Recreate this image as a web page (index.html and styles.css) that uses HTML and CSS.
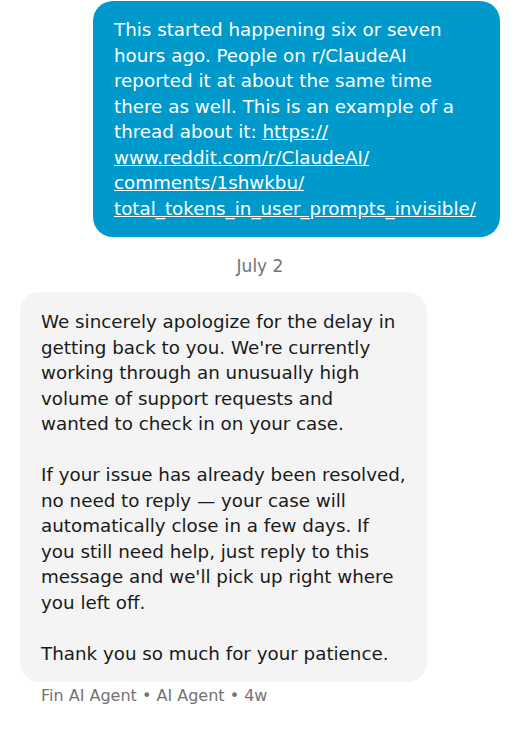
FILE: index.html
```html
<!DOCTYPE html>
<html>
<head>
<meta charset="utf-8">
<link rel="stylesheet" href="styles.css">
</head>
<body>
<div class="chat">
  <div class="row row-user">
    <div class="bubble bubble-user">This started happening six or seven hours ago. People on r/ClaudeAI reported it at about the same time there as well. This is an example of a thread about it: <a href="#">https://<wbr>www.reddit.com/r/ClaudeAI/<wbr>comments/1shwkbu/<wbr>total_tokens_in_user_prompts_invisible/</a></div>
  </div>
  <div class="date">July 2</div>
  <div class="row row-agent">
    <div class="bubble bubble-agent">
      <p>We sincerely apologize for the delay in getting back to you. We're currently working through an unusually high volume of support requests and wanted to check in on your case.</p>
      <p>If your issue has already been resolved, no need to reply — your case will automatically close in a few days. If you still need help, just reply to this message and we'll pick up right where you left off.</p>
      <p>Thank you so much for your patience.</p>
    </div>
    <div class="meta">Fin AI Agent • AI Agent • 4w</div>
  </div>
</div>
</body>
</html>
```

FILE: styles.css
```css
html, body {
  margin: 0;
  padding: 0;
  background: #ffffff;
}
body {
  font-family: "DejaVu Sans", sans-serif;
}
.chat {
  display: flex;
  flex-direction: column;
  padding: 1px 9px 0 20px;
}
.row {
  display: flex;
  flex-direction: column;
}
.row-user {
  align-items: flex-end;
}
.row-agent {
  align-items: flex-start;
}
.bubble {
  box-sizing: border-box;
  width: 407px;
  border-radius: 20px;
  font-size: 18.3px;
  line-height: 25.5px;
  padding: 16px 21px 16px 21px;
  overflow-wrap: break-word;
}
.bubble-user {
  background: #0099cc;
  color: #ffffff;
}
.bubble-user a {
  color: #ffffff;
  text-decoration: underline;
}
.bubble-agent {
  background: #f4f4f4;
  color: #1a1a1a;
  padding-top: 17px;
}
.bubble-agent p {
  margin: 0 0 25.5px 0;
}
.bubble-agent p:last-child {
  margin-bottom: 0;
}
.date {
  text-align: center;
  font-size: 17px;
  color: #737373;
  margin: 18px 0 15px 0;
  line-height: 22px;
}
.meta {
  font-size: 16px;
  color: #737373;
  padding-left: 21px;
  margin-top: 4px;
  line-height: 20px;
}
```
